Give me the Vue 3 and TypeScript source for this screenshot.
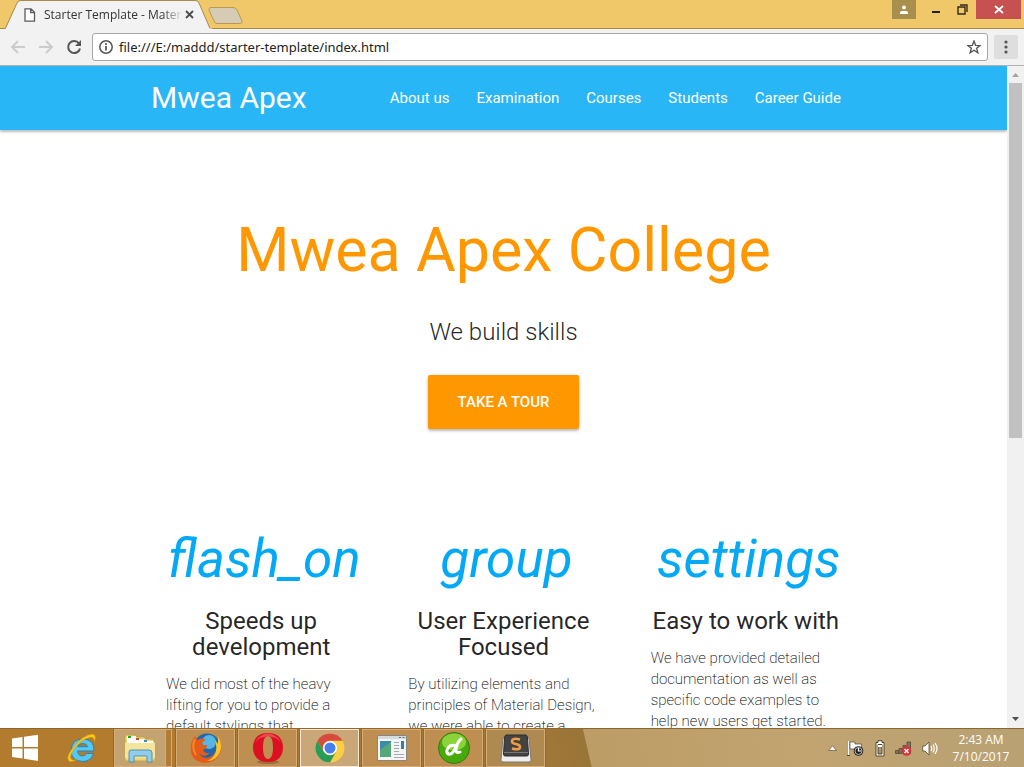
<script setup lang="ts">
interface Feature {
  icon: string
  title: string
  text: string
}

const links: string[] = ['About us', 'Examination', 'Courses', 'Students', 'Career Guide']

const features: Feature[] = [
  { icon: 'flash_on', title: 'Speeds up development', text: 'We did most of the heavy lifting for you to provide a default stylings that' },
  { icon: 'group', title: 'User Experience Focused', text: 'By utilizing elements and principles of Material Design, we were able to create a' },
  { icon: 'settings', title: 'Easy to work with', text: 'We have provided detailed documentation as well as specific code examples to help new users get started.' },
]
</script>

<template>
  <div class="desktop">
    <header class="browser">
      <div class="titlebar">
        <div class="tab">
          <svg class="tab-shape" width="208" height="29" viewBox="0 0 208 29" aria-hidden="true">
            <path d="M0 29 L1 28 L12 3 Q13 .5 16 .5 H190 Q193 .5 194 3 L205 28 L208 29 Z" fill="#f2f2f2" />
            <path d="M0 28.5 L1 27 L12 3 Q13 .5 16 .5 H190 Q193 .5 194 3 L205 28.5" fill="none" stroke="#a5894f" />
          </svg>
          <svg class="page-icon" width="12" height="14" viewBox="0 0 12 14" aria-hidden="true">
            <path d="M1 .8 H7 L10.5 4.3 V13.2 H1 Z M6.7 1 V4.7 H10.4" fill="#fff" stroke="#5a5a5a" stroke-width="1.3" />
          </svg>
          <span class="tab-title">Starter Template - Mater</span>
          <button class="tab-close" aria-label="Close tab">
            <svg width="9" height="9" viewBox="0 0 9 9"><path d="M1 1 L8 8 M8 1 L1 8" stroke="#4c4c4c" stroke-width="1.8" /></svg>
          </button>
        </div>
        <button class="new-tab" aria-label="New tab">
          <svg width="35" height="17" viewBox="0 0 35 17"><path d="M3 .5 H25 Q28 .5 29 3 L34 14 Q34.500 16.500 32 16.500 H9 Q7 16.500 6 14 L1 3 Q.5 .5 3 .5 Z" fill="#d6ccb5" stroke="#b9994f" /></svg>
        </button>
        <div class="window-controls">
          <button class="user" aria-label="Profile">
            <svg width="10" height="10" viewBox="0 0 10 10"><circle cx="5" cy="2.500" r="2" fill="#fff" /><path d="M1 9 V7.500 Q1 6 3 6 H7 Q9 6 9 7.500 V9 Z" fill="#fff" /></svg>
          </button>
          <button class="min" aria-label="Minimize">
            <svg width="10" height="12" viewBox="0 0 10 12"><path d="M1 6 H9" stroke="#222" stroke-width="2" /></svg>
          </button>
          <button class="restore" aria-label="Restore">
            <svg width="11" height="11" viewBox="0 0 11 11"><path d="M3 1 H10 V8 M1 3 H8 V10 H1 Z" fill="none" stroke="#332b18" stroke-width="1.400" /></svg>
          </button>
          <button class="close" aria-label="Close">
            <svg width="10" height="9" viewBox="0 0 10 9"><path d="M1 1 L9 8 M9 1 L1 8" stroke="#fff" stroke-width="1.800" /></svg>
          </button>
        </div>
      </div>
      <div class="toolbar">
        <button class="tool" aria-label="Back">
          <svg width="16" height="16" viewBox="0 0 16 16"><path d="M15 8 H2 M8 2 L2 8 L8 14" fill="none" stroke="#ccc" stroke-width="2" /></svg>
        </button>
        <button class="tool" aria-label="Forward">
          <svg width="16" height="16" viewBox="0 0 16 16"><path d="M1 8 H14 M8 2 L14 8 L8 14" fill="none" stroke="#ccc" stroke-width="2" /></svg>
        </button>
        <button class="tool" aria-label="Reload">
          <svg width="16" height="16" viewBox="0 0 16 16"><path d="M13 4.500 A6 6 0 1 0 14 9.500" fill="none" stroke="#555" stroke-width="2" /><path d="M15 1 V7 H9 Z" fill="#555" /></svg>
        </button>
        <div class="omnibox">
          <svg width="14" height="14" viewBox="0 0 14 14" aria-hidden="true"><circle cx="7" cy="7" r="6.200" fill="none" stroke="#555" stroke-width="1.500" /><path d="M7 6 V10.500 M7 3.300 V4.900" stroke="#444" stroke-width="1.600" /></svg>
          <input class="url" aria-label="Address" value="file:///E:/maddd/starter-template/index.html" />
          <button class="star" aria-label="Bookmark">
            <svg width="14" height="14" viewBox="0 0 14 14"><path d="M7 1 L8.600 5.300 L13.200 5.500 L9.600 8.300 L10.900 12.800 L7 10.200 L3.100 12.800 L4.400 8.300 L.8 5.500 L5.400 5.300 Z" fill="none" stroke="#555" stroke-width="1.300" /></svg>
          </button>
        </div>
        <button class="more" aria-label="Menu">
          <svg width="4" height="14" viewBox="0 0 4 14"><g fill="#555"><circle cx="2" cy="2" r="1.600" /><circle cx="2" cy="7" r="1.600" /><circle cx="2" cy="12" r="1.600" /></g></svg>
        </button>
      </div>
    </header>

    <div class="viewport">
      <div class="page">
        <nav class="nav">
          <div class="container nav-row">
            <a class="brand" href="#">Mwea Apex</a>
            <ul class="links">
              <li v-for="link in links" :key="link"><a href="#">{{ link }}</a></li>
            </ul>
          </div>
        </nav>
        <section class="container hero">
          <h1>Mwea Apex College</h1>
          <p class="tagline">We build skills</p>
          <button class="cta">TAKE A TOUR</button>
        </section>
        <section class="container features">
          <article v-for="feature in features" :key="feature.icon">
            <h2><i>{{ feature.icon }}</i></h2>
            <h5>{{ feature.title }}</h5>
            <p>{{ feature.text }}</p>
          </article>
        </section>
      </div>
      <div class="scrollbar">
        <svg width="17" height="17" viewBox="0 0 17 17" aria-hidden="true"><path d="M5 11 L8.500 7 L12 11 Z" fill="#a3a3a3" /></svg>
        <div class="track"><div class="thumb"></div></div>
        <svg width="17" height="17" viewBox="0 0 17 17" aria-hidden="true"><path d="M5 6 L8.500 10 L12 6 Z" fill="#505050" /></svg>
      </div>
    </div>

    <footer class="taskbar">
      <button class="start" aria-label="Start">
        <svg width="28" height="28" viewBox="0 0 28 28"><path d="M1 4.500 L11.500 3 V13 H1 Z M13 2.800 L27 .8 V13 H13 Z M1 14.500 H11.500 V24.500 L1 23 Z M13 14.500 H27 V27 L13 24.800 Z" fill="#fff" /></svg>
      </button>
      <button class="ie" aria-label="Internet Explorer">
        <svg width="32" height="32" viewBox="0 0 32 32">
          <path d="M28 19 H11.500 Q12 24 16.500 24 Q19.500 24 20.500 21.500 H27.500 Q25 29.500 16.500 29.500 Q5 29 5 18 Q6 7 17 7 Q28.500 7.500 28 19 Z M11.700 14.700 H21.500 Q21 11.500 16.700 11.500 Q12.500 11.500 11.700 14.700 Z" fill="#55c8f4" stroke="#2684b8" fill-rule="evenodd" />
          <path d="M3.500 29.500 Q-1.500 26 7.500 15 Q17 3 26 2 Q31 2 28.500 10 Q28 4.500 24 5.500 Q16 7 9 16 Q1.500 26 6.500 28 Q9 28.500 12 27 Q7 30.500 3.500 29.500 Z" fill="#fbc91e" stroke="#d3900e" stroke-width=".6" />
        </svg>
      </button>
      <button class="task group" aria-label="File Explorer">
        <svg width="32" height="32" viewBox="0 0 32 32">
          <path d="M1 3 H11 L13 5 H20 L22 7 H29 L31 10 V29 H1 Z" fill="#ecd67b" stroke="#c4a344" />
          <path d="M3 4 H12 V7 H20 V9 H29 V13 H3 Z" fill="#fff" />
          <path d="M4 4 H7 V6 H4 Z" fill="#25a326" /><path d="M12 6 H15 V8 H12 Z" fill="#d54b30" /><path d="M20 8 H23 V10 H20 Z" fill="#368fca" />
          <path d="M1 11 H31 V26 H1 Z" fill="#f5e59c" />
          <path d="M5 20 Q5 18 7 18 H25 Q28 18 28 21 V30 H23 V24 H10 V30 H5 Z" fill="#91cdea" stroke="#5190b5" />
        </svg>
      </button>
      <span class="stack"></span>
      <button class="task" aria-label="Firefox">
        <svg width="32" height="32" viewBox="0 0 32 32">
          <circle cx="17" cy="15" r="13.500" fill="#2167ac" /><circle cx="19" cy="10" r="7" fill="#55b6e3" />
          <path d="M28 5 Q33 13 30.500 20 Q26 31 15 31 Q2 30 .7 18 Q.5 9 5 4 L7 8 Q12 5 16 8 Q11 10 12 13 H17 Q17 17 13 18 Q15 22 20 21 Q14 27 9 21 Q13 28 20 25 Q29 21 28 5 Z" fill="#e55b17" />
          <path d="M28 4 Q33 13 30 20 Q26 29 17 29 Q30 23 25 8 L28 12 Z" fill="#fac52c" />
          <path d="M5 7 Q1 16 6 23" fill="none" stroke="#f58924" stroke-width="2" />
        </svg>
      </button>
      <button class="task" aria-label="Opera">
        <svg width="32" height="32" viewBox="0 0 32 32">
          <ellipse cx="16" cy="30" rx="11" ry="2" fill="#775021" opacity=".5" />
          <path d="M16 1 C26 1 31 7 31 15.500 S26 30 16 30 S1 24 1 15.500 S6 1 16 1 Z M16 4 C12.500 4 11 9 11 15.500 S12.500 27 16 27 S21 22 21 15.500 S19.500 4 16 4 Z" fill="#dc1020" fill-rule="evenodd" />
          <path d="M3 11 Q7 2 16 1.500 Q25 2 29 11 Q25 5 19.500 5 Q18 4 16 4 Q14 4 12.500 5 Q7 5 3 11 Z" fill="#f0474f" />
        </svg>
      </button>
      <button class="task active" aria-label="Chrome">
        <svg width="30" height="30" viewBox="0 0 30 30">
          <circle cx="15" cy="15" r="14.500" fill="#fbcf45" />
          <path d="M2.440 7.750 A14.500 14.500 0 0 1 27.560 7.750 H15 A7.250 7.250 0 0 0 8.720 18.600 Z" fill="#d64b3e" />
          <path d="M2.440 7.750 A14.500 14.500 0 0 0 15 29.500 L21.280 18.600 A7.250 7.250 0 0 1 8.720 18.600 Z" fill="#279d58" />
          <circle cx="15" cy="15" r="7" fill="#fff" /><circle cx="15" cy="15" r="5.500" fill="#4580ed" />
        </svg>
      </button>
      <button class="task" aria-label="Application">
        <svg width="30" height="26" viewBox="0 0 30 26">
          <path d="M.5 .5 H29.500 V25.500 H.5 Z" fill="#f4f5f6" stroke="#8b8580" /><path d="M1 1 H29 V4 H1 Z" fill="#d3dbe2" />
          <path d="M3 6 H14 V22 H3 Z" fill="#3a8ca8" /><path d="M3 15 L14 7 V22 H3 Z" fill="#55a979" />
          <path d="M17 7.500 H22 M17 10.500 H22 M17 13.500 H22 M17 16.500 H22 M17 19.500 H27 M17 22.500 H27" stroke="#a7a8a9" /><path d="M24 6 H27 V14 H24 Z" fill="#347eae" />
          <path d="M22 2.500 H24 M25.500 2.500 H27.500" stroke="#5f7285" />
        </svg>
      </button>
      <button class="task" aria-label="Dreamweaver">
        <svg width="32" height="32" viewBox="0 0 32 32">
          <circle cx="16" cy="16" r="15.500" fill="#48a90d" stroke="#347d0c" /><ellipse cx="16" cy="10" rx="12" ry="8.500" fill="#8bd23b" />
          <path d="M23 7 C19 10 18 17 15 20 C12 24 8 22 9 18 C10 14 14 12 19 14 M19 13 C17 19 18 22 22 20" fill="none" stroke="#fff" stroke-width="3" stroke-linecap="round" />
        </svg>
      </button>
      <button class="task faint" aria-label="Sublime Text">
        <svg width="32" height="29" viewBox="0 0 32 29">
          <path d="M3 4 H29 L31 26 Q31 28 29 28 H3 Q1 28 1 26 Z" fill="#eee" stroke="#7b7b76" /><path d="M6 1 H26 Q27 1 27.500 4 L28.500 20 Q28.500 22 27 22 H5 Q3.500 22 3.500 20 L4.500 4 Q5 1 6 1 Z" fill="#434343" stroke="#2d2d2d" /><path d="M4 18.500 H28" stroke="#777" />
          <path d="M20 5.500 Q12 3.500 12 7.500 Q12 9.500 16 10 Q20.500 11 20 13.500 Q19 16.500 12 14.500" fill="none" stroke="#f19b42" stroke-width="2.500" />
        </svg>
      </button>
      <div class="wallpaper"></div>
      <div class="tray">
        <svg width="9" height="6" viewBox="0 0 9 6" aria-hidden="true"><path d="M.5 5.500 L4.500 .8 L8.500 5.500 Z" fill="#fff" stroke="#665638" stroke-width=".7" /></svg>
        <svg width="18" height="17" viewBox="0 0 18 17" aria-hidden="true"><path d="M1.500 1 V16" stroke="#55452a" stroke-width="3" /><path d="M1.500 1 V15" stroke="#fff" stroke-width="2" /><path d="M3 2 H8 V4 H14.500 V11 H8 V9 H3 Z" fill="#fff" stroke="#55452a" stroke-width=".7" /><circle cx="11.500" cy="11" r="4.800" fill="#222" /><circle cx="11.500" cy="11" r="3.500" fill="none" stroke="#ddd" stroke-width=".8" /><path d="M11.500 8 V11 H14" fill="none" stroke="#fff" stroke-width="1.200" /></svg>
        <svg width="10" height="17" viewBox="0 0 10 17" aria-hidden="true"><path d="M3 .7 H7 V2.500 H9 V16 H1 V2.500 H3 Z" fill="#fff" stroke="#51442c" /><path d="M3 4.500 H7 V14 H3 Z" fill="#ad9565" stroke="#51442c" /><path d="M3 5 H7 V7 H3 Z" fill="#fff" /></svg>
        <svg width="17" height="15" viewBox="0 0 17 15" aria-hidden="true"><path d="M.5 9.500 H3.500 V12.500 H.5 Z M4 7.500 H7 V12.500 H4 Z M8 4.500 H11 V12.500 H8 Z M12 1 H15.500 V12.500 H12 Z" fill="#83745a" stroke="#554935" stroke-width=".8" /><circle cx="11.500" cy="10" r="4.800" fill="#d9303b" /><path d="M9.500 8 L13.500 12 M13.500 8 L9.500 12" stroke="#fff" stroke-width="1.500" /></svg>
        <svg width="16" height="15" viewBox="0 0 16 15" aria-hidden="true"><path d="M.7 5 H3 L7 1 V14 L3 10 H.7 Z" fill="#fff" stroke="#55472e" stroke-width=".8" /><path d="M9 5 Q10.500 7.500 9 10 M11 3.500 Q13.500 7.500 11 11.500 M13 2 Q17 7.500 13 13" fill="none" stroke="#fff" stroke-width="1.200" /></svg>
      </div>
      <div class="clock"><span>2:43 AM</span><span>7/10/2017</span></div>
    </footer>
  </div>
</template>

<style>
body { margin: 0; overflow: hidden; }
</style>

<style scoped>
* { box-sizing: border-box; }
button { margin: 0; padding: 0; border: 0; background: none; font: inherit; display: flex; align-items: center; justify-content: center; flex: none; }
svg { display: block; flex: none; }
a { color: inherit; text-decoration: none; }
h1, h2, h5, p, ul { margin: 0; padding: 0; font-weight: 400; }

.desktop { height: 100vh; display: flex; flex-direction: column; background: #fff; font-family: "Open Sans", "Noto Sans", sans-serif; }

.browser { flex: none; background: #f2f2f2; border-bottom: 1px solid #b0b0b0; }
.titlebar { height: 29px; display: flex; align-items: flex-start; background: #f0c769; border-bottom: 1px solid #a5894f; }
.tab { position: relative; width: 208px; height: 29px; margin-left: 5px; padding: 0 19px 0 19px; display: flex; align-items: center; gap: 8px; }
.tab-shape { position: absolute; left: 0; top: 0; }
.page-icon, .tab-title, .tab-close { position: relative; }
.tab-title { flex: 1; margin-right: -6px; overflow: hidden; white-space: nowrap; font-size: 12px; line-height: 16px; color: #333; mask-image: linear-gradient(to right, #000 85%, transparent); }
.new-tab { margin: 7px 0 0 -5px; }
.window-controls { margin-left: auto; display: flex; }
.window-controls button { height: 19px; }
.user { width: 24px; background: #a98f4d; }
.min { width: 40px; }
.min svg { margin-top: 4px; }
.restore { width: 12px; margin-right: 8px; }
.close { width: 45px; margin-right: 3px; background: #c75050; }
.toolbar { height: 36px; display: flex; align-items: center; padding: 0 6px 0 10px; gap: 12px; }
.tool { width: 16px; height: 16px; }
.omnibox { flex: 1; height: 28px; margin-left: -2px; margin-right: -6px; padding: 0 6px; display: flex; align-items: center; gap: 6px; background: #fff; border: 1px solid #a6a6a6; border-radius: 3px; }
.url { flex: 1; min-width: 0; height: 20px; padding: 0; border: 0; outline: 0; background: none; color: #222; font: 13px/20px "Noto Sans", "Open Sans", sans-serif; }
.more { width: 24px; height: 24px; background: #dedede; border-radius: 2px; }

.viewport { flex: 1; min-height: 0; display: flex; overflow: hidden; }
.page { flex: 1; min-width: 0; overflow: hidden; font-family: Roboto, sans-serif; color: rgba(0, 0, 0, 0.87); }
.container { width: 70%; margin: 0 auto; }
.nav { background: #29b6f6; color: #fff; box-shadow: 0 2px 2px rgba(0, 0, 0, 0.14), 0 1px 4px rgba(0, 0, 0, 0.2); }
.nav-row { height: 64px; display: flex; align-items: center; justify-content: space-between; }
.brand { font-size: 30px; line-height: 64px; white-space: nowrap; }
.links { display: flex; gap: 27px; padding-right: 15px; list-style: none; font-size: 15px; line-height: 64px; white-space: nowrap; }

.hero { padding-top: 87px; display: flex; flex-direction: column; align-items: center; }
.hero h1 { color: #ff9800; font-size: 61px; line-height: 67px; white-space: nowrap; }
.tagline { margin-top: 35px; font-size: 24px; line-height: 26px; font-weight: 300; }
.cta { margin-top: 30px; height: 54px; padding: 0 30px; border-radius: 2px; background: #ff9800; color: #fff; font-size: 15px; font-weight: 500; box-shadow: 0 2px 2px rgba(0, 0, 0, 0.14), 0 1px 4px rgba(0, 0, 0, 0.2); }

.features { padding: 102px 15px 0; display: grid; grid-template-columns: repeat(3, minmax(0, 1fr)); column-gap: 52px; }
.features h2 { display: flex; justify-content: center; padding-left: 6px; color: #03a9f4; font-size: 53px; line-height: 57px; }
.features h5 { margin-top: 20px; text-align: center; font-size: 24px; line-height: 26px; }
.features p { margin-top: 14px; font-size: 15px; line-height: 21px; font-weight: 200; color: #000; }

.scrollbar { width: 17px; flex: none; display: flex; flex-direction: column; background: #f1f1f1; }
.track { flex: 1; padding: 0 2px; }
.thumb { height: 56.5%; background: #c1c1c1; }

.taskbar { flex: none; height: 39px; display: flex; align-items: center; border-top: 1px solid #8a672e; background: linear-gradient(77deg, #b37b2d 0, #b07a2f 300px, #a27737 530px, #987538 576px, #bd9d66 577px, #c1a471 800px, #b8a173 100%); }
.start { width: 50px; height: 38px; }
.ie { width: 64px; height: 38px; }
.task { width: 59px; height: 38px; margin-right: 3px; background: #bf8e51; border: 1px solid #d3ad77; box-shadow: 0 0 0 1px #966727; }
.group { width: 52px; margin-right: 0; background: #c4a372; }
.stack { width: 6px; height: 38px; margin-right: 4px; border: 1px solid #d3ad77; border-left: 0; background: #b37c36; }
.active { background: #c9a779; border-color: #f5ead8; }
.faint { margin-right: 0; background: #ae8a51; }
.wallpaper { flex: 1; }
.tray { display: flex; align-items: center; gap: 10px; }
.clock { width: 86px; display: flex; flex-direction: column; align-items: center; color: #fff; font-size: 12px; line-height: 17px; }
</style>
